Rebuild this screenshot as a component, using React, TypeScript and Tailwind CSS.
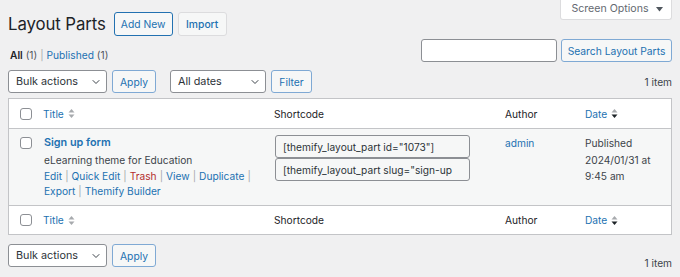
import { ChevronDown } from 'lucide-react'

function Check() {
  return <span className="block w-[12px] h-[12px] rounded-[3px] border border-[#8c8f94] bg-white" />
}

function SortIcon({ active = false }: { active?: boolean }) {
  return (
    <svg width="7" height="11" viewBox="0 0 7 11" className="ml-[4px]">
      <path d="M0.5 4.5 L3.5 1 L6.5 4.5 Z" fill="#a7aaad" />
      <path d="M0.5 6.5 L3.5 10 L6.5 6.5 Z" fill={active ? '#1d2327' : '#a7aaad'} />
    </svg>
  )
}

function Select({ label, width, className = '' }: { label: string; width: string; className?: string }) {
  return (
    <div className={`${width} h-[23px] flex items-center justify-between pl-[7px] pr-[4px] bg-white border border-[#8c8f94] rounded-[3px] text-[#2c3338] text-[10.8px] ${className}`}>
      <span>{label}</span>
      <ChevronDown className="w-[12px] h-[12px] text-[#3c434a]" strokeWidth={2} />
    </div>
  )
}

function Button({ label, width, className = '' }: { label: string; width: string; className?: string }) {
  return (
    <div className={`${width} h-[23px] flex items-center justify-center bg-[#f6f7f7] border border-[#7fa9d4] rounded-[3px] text-[#2271b1] text-[10.3px] ${className}`}>
      {label}
    </div>
  )
}

function HeadRow() {
  return (
    <div className="grid grid-cols-[28px_231px_231px_80px_1fr] h-full items-center bg-white">
      <div className="flex justify-end pr-[5px]"><Check /></div>
      <div className="pl-[6px] flex items-center text-[#2271b1]">Title<SortIcon /></div>
      <div className="pl-[6px] text-[#1d2327]">Shortcode</div>
      <div className="pl-[6px] text-[#1d2327]">Author</div>
      <div className="pl-[6px] flex items-center text-[#2271b1]">Date<SortIcon active /></div>
    </div>
  )
}

export default function App() {
  const sep = <span className="text-[#a7aaad] mx-[3px]">|</span>

  return (
    <div className="w-[680px] h-[277px] overflow-hidden bg-[#f0f0f1] font-['Inter',sans-serif] text-[10.2px] leading-[16px] text-[#3c434a]">
      <div className="pl-2 pr-2">
        {/* Heading + screen options */}
        <div className="flex justify-between items-start">
          <div className="flex items-center mt-[12px] h-[24px]">
            <h1 className="text-[16.8px] tracking-[-0.1px] leading-[24px] text-[#1d2327] font-normal mr-[8px]">Layout Parts</h1>
            <div className="w-[59px] h-[24px] flex items-center justify-center bg-[#f6f7f7] border border-[#2271b1] rounded-[3px] text-[#2271b1] text-[10.3px]">Add New</div>
            <div className="w-[49px] h-[24px] ml-[5px] flex items-center justify-center bg-[#f6f7f7] border border-[#dcdcde] rounded-[3px] text-[#2271b1] text-[10.3px] font-medium">Import</div>
          </div>
          <div className="w-[112px] h-[21px] flex items-center justify-center gap-[7px] pl-[2px] bg-white border border-t-0 border-[#dcdcde] rounded-b-[3px] text-[#646970] text-[10.6px] -mt-px">
            Screen Options
            <svg width="7" height="5" viewBox="0 0 7 5"><path d="M0 0 H7 L3.5 4.5 Z" fill="#50575e" /></svg>
          </div>
        </div>

        {/* Views + search */}
        <div className="flex justify-between items-start mt-[3px] h-[23px]">
          <div className="mt-[9px] pl-[2px] leading-[14px]">
            <span className="font-semibold text-[#1d2327]">All</span> <span className="text-[#50575e]">(1)</span>
            {sep}
            <span className="text-[#2271b1]">Published</span> <span className="text-[#50575e]">(1)</span>
          </div>
          <div className="flex items-center gap-[4px]">
            <div className="w-[136px] h-[23px] bg-white border border-[#8c8f94] rounded-[3px]" />
            <Button label="Search Layout Parts" width="w-[111px]" />
          </div>
        </div>

        {/* Top tablenav */}
        <div className="flex items-center justify-between mt-[8px] h-[23px]">
          <div className="flex items-center">
            <Select label="Bulk actions" width="w-[99px]" />
            <Button label="Apply" width="w-[44px]" className="ml-[5px]" />
            <Select label="All dates" width="w-[96px]" className="ml-[14px]" />
            <Button label="Filter" width="w-[41px]" className="ml-[5px]" />
          </div>
          <span className="text-[#3c434a]">1 item</span>
        </div>

        {/* Table */}
        <div className="mt-[5px] border border-[#c3c4c7] bg-white">
          <div className="h-[30px] border-b border-[#c3c4c7]"><HeadRow /></div>
          <div className="grid grid-cols-[28px_231px_231px_80px_1fr] h-[77px] bg-[#f6f7f7] border-b border-[#c3c4c7]">
            <div className="flex justify-end pr-[5px] pt-[8px]"><Check /></div>
            <div className="pl-[7px] pt-[6px]">
              <div className="font-semibold text-[#2271b1] text-[10.8px] leading-[16px]">Sign up form</div>
              <div className="mt-[1px] text-[#3c434a]">eLearning theme for Education</div>
              <div className="text-[#2271b1]">
                Edit{sep}Quick Edit{sep}<span className="text-[#b32d2e]">Trash</span>{sep}View{sep}Duplicate<span className="text-[#a7aaad] ml-[3px]">|</span>
              </div>
              <div className="text-[#2271b1] -mt-px">Export{sep}Themify Builder</div>
            </div>
            <div className="pl-[7px] pt-[6px]">
              <div className="w-[195px] h-[23px] flex items-center px-[7px] bg-[#f6f7f7] border border-[#8c8f94] rounded-[3px] text-[#2c3338] overflow-hidden whitespace-nowrap">[themify_layout_part id="1073"]</div>
              <div className="w-[195px] h-[23px] flex items-center px-[7px] bg-[#f6f7f7] border border-[#8c8f94] rounded-[3px] text-[#2c3338] overflow-hidden whitespace-nowrap">[themify_layout_part slug="sign-up</div>
            </div>
            <div className="pl-[6px] pt-[6px] text-[#2271b1]">admin</div>
            <div className="pl-[6px] pt-[6px] leading-[16.5px] text-[#3c434a]">
              <div>Published</div>
              <div>2024/01/31 at</div>
              <div>9:45 am</div>
            </div>
          </div>
          <div className="h-[28px]"><HeadRow /></div>
        </div>

        {/* Bottom tablenav */}
        <div className="flex justify-between mt-[9px]">
          <div className="flex items-center">
            <Select label="Bulk actions" width="w-[99px]" />
            <Button label="Apply" width="w-[44px]" className="ml-[5px]" />
          </div>
          <span className="self-end -mb-[4px]">1 item</span>
        </div>
      </div>
    </div>
  )
}
